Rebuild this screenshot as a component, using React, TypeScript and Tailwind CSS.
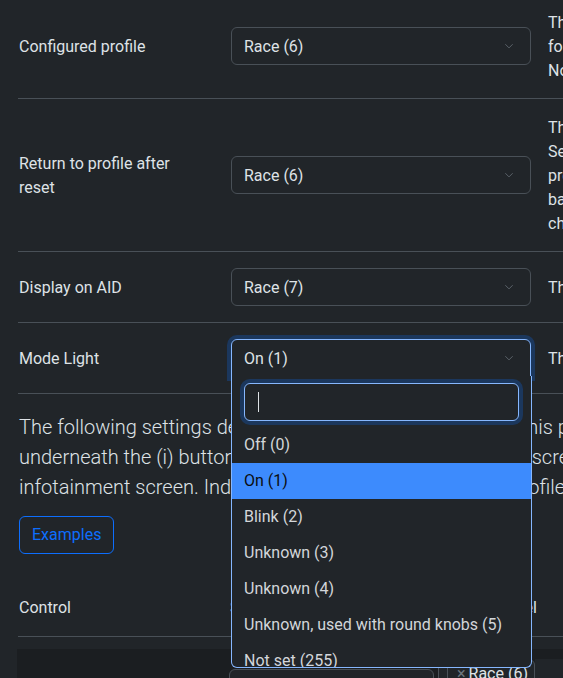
import React from "react";

type Row = { label: React.ReactNode; value: string; desc: string[]; focused?: boolean };

const rows: Row[] = [
    {
        label: "Configured profile",
        value: "Race (6)",
        desc: [
            "The profile that is currently selected in the car,",
            "for example after pressing the profile button.",
            "Not all cars support every profile.",
        ],
    },
    {
        label: "Return to profile after reset",
        value: "Race (6)",
        desc: [
            "The profile to return to after a reset.",
            "Set this to the current profile to stay in your",
            "preferred mode, otherwise the car switches",
            "back to this profile when the ignition is",
            "changed.",
        ],
    },
    {
        label: "Display on AID",
        value: "Race (7)",
        desc: ["The profile shown on the AID (instrument cluster)."],
    },
    {
        label: "Mode Light",
        value: "On (1)",
        desc: ["The behaviour of the mode light."],
        focused: true,
    },
];

const options = [
    "Off (0)",
    "On (1)",
    "Blink (2)",
    "Unknown (3)",
    "Unknown (4)",
    "Unknown, used with round knobs (5)",
    "Not set (255)",
];

function Chevron() {
    return (
        <svg width="12" height="12" viewBox="0 0 16 16" fill="none" className="shrink-0">
            <path d="M3.5 6l4.5 4.5L12.5 6" stroke="#5c636a" strokeWidth="1.3" strokeLinecap="round" strokeLinejoin="round" />
        </svg>
    );
}

function Dropdown() {
    return (
        <div className="absolute left-0 top-full z-20 w-[301px] -mt-px border border-t-0 border-[#86b7fe] rounded-b-[6px] bg-[#212529]">
            <div className="px-3 pt-[7px] pb-[6px]">
                <div className="h-[38px] rounded-[6px] border border-[#86b7fe] bg-[#212529] shadow-[0_0_0_4px_rgba(13,110,253,0.25)] flex items-center pl-[13px]">
                    <div className="w-px h-[20px] bg-[#dee2e6]" />
                </div>
            </div>
            <div className="h-[240px] overflow-hidden">
                {options.map((o) => (
                    <div
                        key={o}
                        className={
                            o === "On (1)"
                                ? "h-[36px] flex items-center px-3 whitespace-nowrap bg-[#3d8bfd] text-[#0b0d0f]"
                                : "h-[36px] flex items-center px-3 whitespace-nowrap text-[#d3d6da]"
                        }
                    >
                        {o}
                    </div>
                ))}
            </div>
        </div>
    );
}

function Select({ value, focused }: { value: string; focused?: boolean }) {
    return (
        <div className="relative w-[300px]">
            <div
                className={
                    focused
                        ? "h-[38px] rounded-t-[6px] border border-[#86b7fe] shadow-[0_0_0_4px_rgba(13,110,253,0.25)] bg-[#212529] flex items-center justify-between pl-3 pr-[15px]"
                        : "h-[38px] rounded-[6px] border border-[#495057] bg-[#212529] flex items-center justify-between pl-3 pr-[15px]"
                }
            >
                <span className="text-[#dee2e6] pt-px">{value}</span>
                <Chevron />
            </div>
            {focused && <Dropdown />}
        </div>
    );
}

export default function App() {
    return (
        <div
            className="relative w-[563px] h-[678px] overflow-hidden bg-[#212529] text-[#dee2e6] text-base leading-6"
            style={{ fontFamily: "Roboto, 'Liberation Sans', sans-serif" }}
        >
            <div className="w-[1000px] pl-[18px] -mt-[6px]">
                {rows.map((r, i) => (
                    <div key={i} className="flex border-b border-[#495057]">
                        <div className="w-[213px] pl-px pr-[34px] pt-[17px] pb-[15px] flex items-center">{r.label}</div>
                        <div className="py-4 flex items-center">
                            <Select value={r.value} focused={r.focused} />
                        </div>
                        <div className="pl-[17px] pt-[17px] pb-[15px] whitespace-nowrap flex flex-col justify-center">
                            {r.desc.map((d) => (
                                <div key={d}>{d}</div>
                            ))}
                        </div>
                    </div>
                ))}

                <div className="mt-[18px] text-[20px] leading-[30px] font-light whitespace-nowrap pl-px">
                    <div>The following settings define all controls displayed within this profile</div>
                    <div>underneath the (i) button inside the driving mode selection screen of the</div>
                    <div>infotainment screen. Individual functions might differ by profile.</div>
                </div>

                <div className="mt-[14px] pl-px">
                    <button className="h-[38px] px-3 rounded-[6px] border border-[#0d6efd] text-[#0d6efd]">
                        Examples
                    </button>
                </div>

                <div className="mt-[26px] flex border-b border-[#495057] py-4">
                    <div className="w-[212px] pl-px">Control</div>
                    <div className="w-[208px]">Setting</div>
                    <div className="w-[99px] flex justify-end whitespace-nowrap">Visible on panel</div>
                </div>
            </div>

            <div className="mt-[12px] ml-[17px] h-[40px] bg-[#1b1e21] flex items-start pt-[10px]">
                <div className="w-[212px]" />
                <div className="mt-[10px] w-[205px] h-[30px] border border-[#495057] rounded-t-[6px] bg-[#212529]" />
                <div className="ml-[4px] w-[97px] h-[30px] border border-[#495057] rounded-t-[6px] bg-[#212529] flex">
                    <div className="ml-[8px] border-l border-[#495057] flex items-start pl-[9px] pt-[2px] text-[#dee2e6] whitespace-nowrap">
                        <span className="text-[#6c757d] mr-[3px]">×</span>Race (6)
                    </div>
                </div>
                <div className="flex-1 h-full bg-[#212529]" />
            </div>
        </div>
    );
}
